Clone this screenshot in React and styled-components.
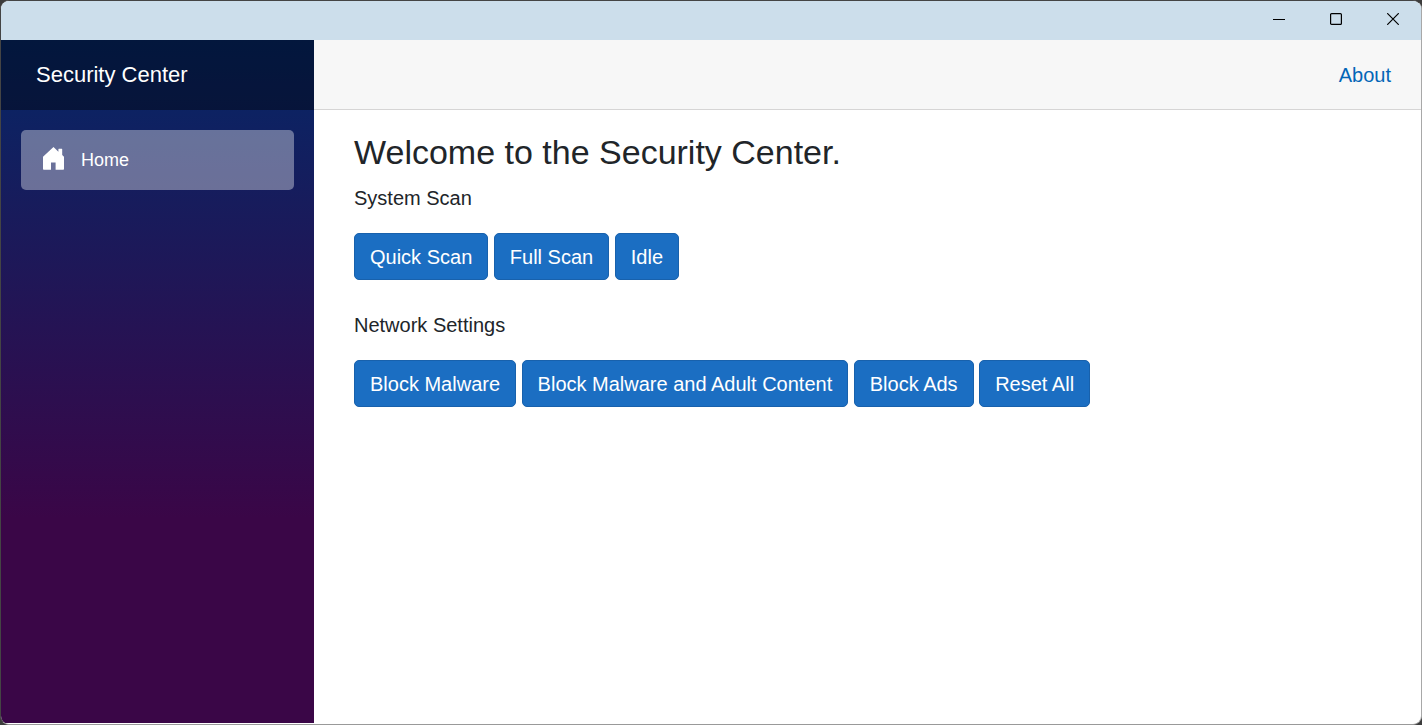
import React, { Fragment } from 'react';
import styled, { createGlobalStyle } from 'styled-components';

const GlobalStyle = createGlobalStyle`
  *, *::before, *::after { box-sizing: border-box; }
  body {
    margin: 0;
    background: #3c3c3c;
    color: #212529;
    font-family: "Liberation Sans", Arial, sans-serif;
    font-size: 20px;
    line-height: 30px;
  }
`;

const Window = styled.div`
  display: flex;
  flex-direction: column;
  min-height: 100vh;
  overflow: hidden;
  border: 1px solid #444;
  border-right-color: #a8a8a8;
  border-bottom-color: #999;
  border-radius: 9px;
  background: #fff;
`;

const TitleBar = styled.div`
  display: flex;
  justify-content: flex-end;
  height: 39px;
  background: #ccdeeb;
`;

const WindowButton = styled.button`
  display: flex;
  align-items: center;
  justify-content: center;
  width: 57px;
  height: 36px;
  padding: 0;
  border: 0;
  background: transparent;
  color: #000;
`;

const Page = styled.div`
  display: flex;
  flex: 1;
`;

const Sidebar = styled.aside`
  flex: none;
  width: 313px;
  margin-bottom: 1px;
  background: linear-gradient(180deg, #052767 0%, #3a0647 70%);
`;

const Brand = styled.div`
  display: flex;
  align-items: center;
  height: 70px;
  padding-left: 35px;
  background: rgba(0, 0, 0, 0.4);

  a {
    color: #fff;
    font-size: 22px;
    text-decoration: none;
  }
`;

const Nav = styled.nav`
  padding: 20px;
`;

const NavLink = styled.a`
  display: flex;
  align-items: center;
  gap: 16px;
  height: 60px;
  padding-left: 22px;
  border-radius: 5px;
  background: rgba(255, 255, 255, 0.37);
  color: #fff;
  font-size: 18px;
  text-decoration: none;
`;

const Main = styled.main`
  flex: 1;
  min-width: 0;
`;

const TopRow = styled.header`
  display: flex;
  align-items: center;
  justify-content: flex-end;
  height: 70px;
  padding-right: 30px;
  border-bottom: 1px solid #d6d5d5;
  background: #f7f7f7;

  a {
    color: #0366b7;
    text-decoration: none;
  }
`;

const Content = styled.article`
  padding: 21px 30px 30px 40px;
`;

const Heading = styled.h1`
  margin: 0 0 10px;
  font-size: 34px;
  font-weight: 400;
  line-height: 42px;
`;

const Section = styled.section`
  margin-bottom: 30px;
`;

const Label = styled.p`
  margin: 0 0 20px;
`;

const Button = styled.button`
  height: 47px;
  padding: 0 15px;
  border: 1px solid #1861ac;
  border-radius: 5px;
  background: #1b6ec2;
  color: #fff;
  font: inherit;
  vertical-align: top;
`;

const HomeIcon = () => (
  <svg width="22" height="26" viewBox="0 0 22 26" fill="currentColor" aria-hidden="true">
    <path d="M10.5 0 0 9.7V22q0 .8.8.8H8V15.6h4.6v7.2h7.6q.8 0 .8-.8V9.7l-1.8-1.8V2.2q0-.5-.5-.5h-2.8q-.5 0-.5.5v2.5Z" />
  </svg>
);

const ButtonGroup = ({ title, actions }) => (
  <Section>
    <Label>{title}</Label>
    <div role="group" aria-label={title}>
      {actions.map((action) => (
        <Fragment key={action}>
          <Button type="button">{action}</Button>{' '}
        </Fragment>
      ))}
    </div>
  </Section>
);

export default function App() {
  return (
    <>
      <GlobalStyle />
      <Window>
        <TitleBar>
          <WindowButton type="button" aria-label="Minimize">
            <svg width="12" height="12" viewBox="0 0 12 12" stroke="currentColor">
              <path d="M0 6.5h12" />
            </svg>
          </WindowButton>
          <WindowButton type="button" aria-label="Maximize">
            <svg width="12" height="12" viewBox="0 0 12 12" fill="none" stroke="currentColor" strokeWidth="1.2">
              <rect x=".6" y=".6" width="10.8" height="10.8" rx="1" />
            </svg>
          </WindowButton>
          <WindowButton type="button" aria-label="Close">
            <svg width="12" height="12" viewBox="0 0 12 12" stroke="currentColor" strokeWidth="1.2">
              <path d="m.2.2 11.6 11.6M11.8.2.2 11.8" />
            </svg>
          </WindowButton>
        </TitleBar>
        <Page>
          <Sidebar>
            <Brand>
              <a href="#">Security Center</a>
            </Brand>
            <Nav>
              <NavLink href="#" aria-current="page">
                <HomeIcon />
                Home
              </NavLink>
            </Nav>
          </Sidebar>
          <Main>
            <TopRow>
              <a href="#about">About</a>
            </TopRow>
            <Content>
              <Heading>Welcome to the Security Center.</Heading>
              <ButtonGroup title="System Scan" actions={['Quick Scan', 'Full Scan', 'Idle']} />
              <ButtonGroup
                title="Network Settings"
                actions={['Block Malware', 'Block Malware and Adult Content', 'Block Ads', 'Reset All']}
              />
            </Content>
          </Main>
        </Page>
      </Window>
    </>
  );
}
